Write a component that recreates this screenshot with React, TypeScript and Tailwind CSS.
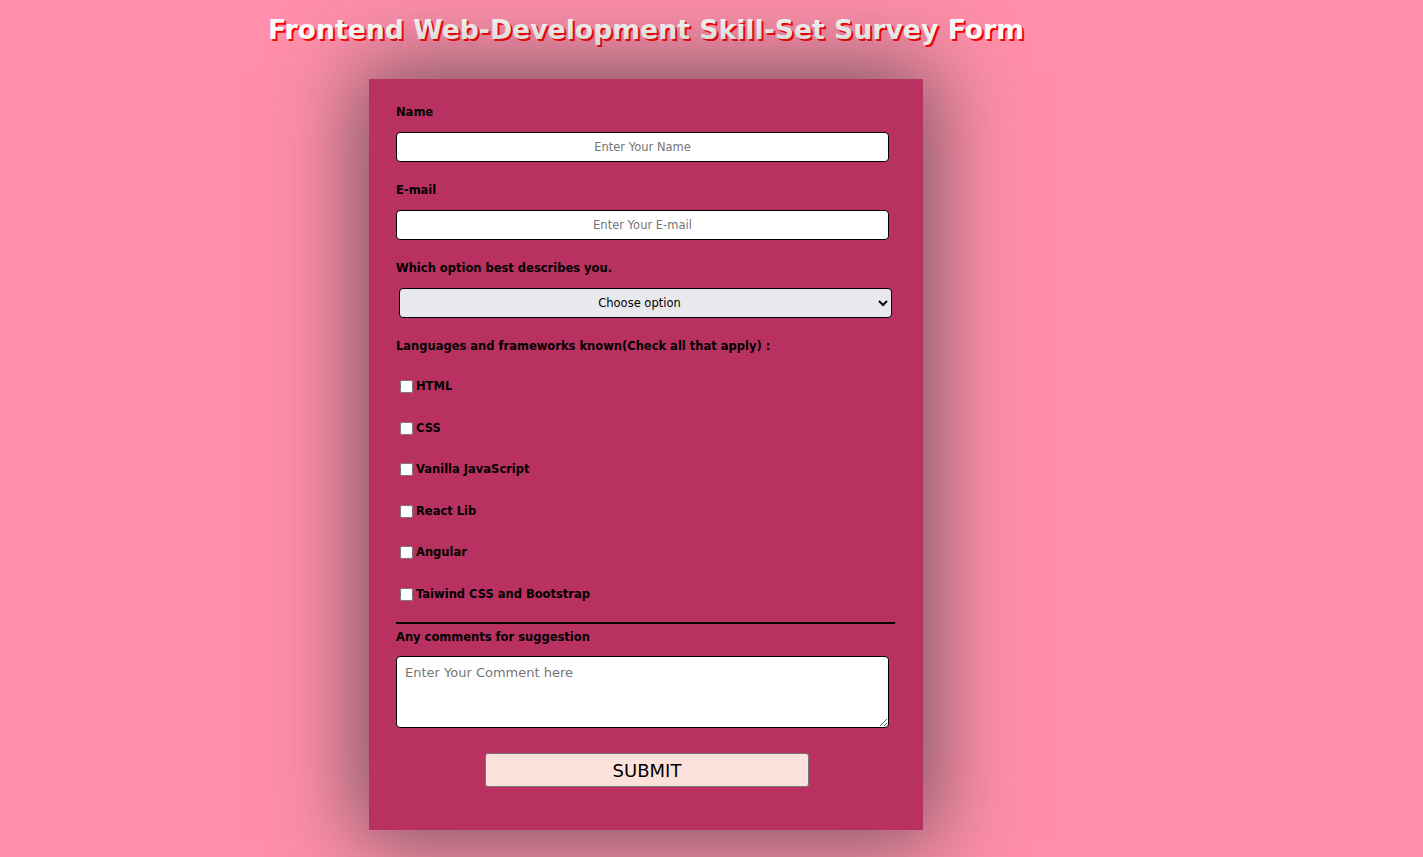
import React from 'react';

const skills = [
  'HTML',
  'CSS',
  'Vanilla JavaScript',
  'React Lib',
  'Angular',
  'Taiwind CSS and Bootstrap',
];

const font = "font-['Verdana','DejaVu_Sans',sans-serif]";

function Label({ children, className = '' }: { children: React.ReactNode; className?: string }) {
  return <label className={`block text-[11.5px] leading-[13px] font-bold text-black ${className}`}>{children}</label>;
}

export default function App() {
  return (
    <div className={`min-h-[857px] w-full bg-[#ff8fab] ${font}`}>
      <div className="w-[1292px] flex flex-col items-center">
        <h1 className="pt-[14px] text-[26.7px] leading-[32px] font-bold text-white [text-shadow:2px_2px_0_#ff0000]">
          Frontend Web-Development Skill-Set Survey Form
        </h1>

        <form
          className="mt-[33px] w-[554px] bg-[#b83160] pt-[27px] pb-[43px] px-[27px] shadow-[0_0_80px_12px_rgba(60,60,60,0.7)]"
          onSubmit={(e) => e.preventDefault()}
        >
          <Label>Name</Label>
          <input
            type="text"
            placeholder="Enter Your Name"
            className="mt-[13px] block h-[30px] w-[493px] rounded-[4px] border border-black bg-white text-center text-[11.5px] placeholder:text-[#757575] outline-none"
          />

          <Label className="mt-[22px]">E-mail</Label>
          <input
            type="email"
            placeholder="Enter Your E-mail"
            className="mt-[13px] block h-[30px] w-[493px] rounded-[4px] border border-black bg-white text-center text-[11.5px] placeholder:text-[#757575] outline-none"
          />

          <Label className="mt-[22px]">Which option best describes you.</Label>
          <select
            defaultValue=""
            className="mt-[13px] ml-[3px] block h-[30px] w-[493px] rounded-[4px] border border-black bg-[#e9e8ed] text-center [text-align-last:center] text-[11.5px] text-black"
          >
            <option value="">Choose option</option>
            <option value="student">Student</option>
            <option value="job">Full Time Job</option>
            <option value="learner">Full Time Learner</option>
            <option value="other">Other</option>
          </select>

          <Label className="mt-[22px]">Languages and frameworks known(Check all that apply) :</Label>
          <div className="mt-[13px]">
            {skills.map((s) => (
              <div key={s} className="flex h-[41.5px] items-center">
                <input type="checkbox" id={s} className="ml-[4px] mr-[3px] h-[13px] w-[13px]" />
                <label htmlFor={s} className="text-[11.5px] font-bold text-black">
                  {s}
                </label>
              </div>
            ))}
          </div>

          <hr className="mt-[7px] w-[499px] border-t-2 border-black" />

          <Label className="mt-[7px]">Any comments for suggestion</Label>
          <textarea
            placeholder="Enter Your Comment here"
            className="mt-[12px] block h-[72px] w-[493px] rounded-[4px] border border-black bg-white px-[8px] py-[8px] text-[13px] leading-[16px] placeholder:text-[#757575] outline-none"
          />

          <div className="mt-[25px] flex justify-center">
            <button
              type="submit"
              className="ml-[2px] h-[34px] w-[324px] rounded-[3px] border border-[#767676] bg-[#fde2dc] text-[18px] text-black"
            >
              SUBMIT
            </button>
          </div>
        </form>
      </div>
    </div>
  );
}
